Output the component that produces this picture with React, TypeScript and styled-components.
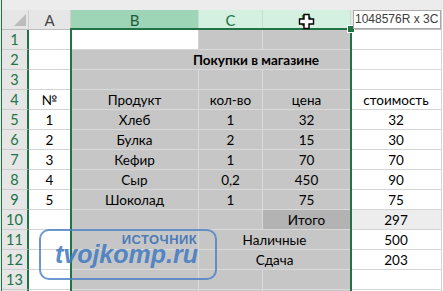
import { createGlobalStyle, styled, css } from "styled-components"

const GlobalStyle = createGlobalStyle`
  html, body { margin: 0; padding: 0; background: #fff; }
  #root { width: 443px; height: 291px; }
`;

const CELL_FONT = `"Lato", "Noto Sans", "Liberation Sans", sans-serif`;

const Root = styled.div`
  position: relative;
  width: 443px;
  height: 291px;
  overflow: hidden;
  box-sizing: border-box;
  padding-left: 1px;
  background: #e8e8e8;
  font-family: ${CELL_FONT};
`;

const Frame = styled.div`
  height: 100%;
  border-left: 1px solid #217346;
  display: flex;
  flex-direction: column;
  background: #fff;
`;

const TopStrip = styled.div`
  flex: none;
  height: 10px;
  background: #ececec;
`;

const Grid = styled.div`
  display: grid;
  grid-template-columns: 27px 42px 128px 64px 88px 91px;
  grid-auto-rows: 20px;
`;

const Corner = styled.div`
  position: relative;
  box-sizing: border-box;
  background: #e6e6e6;
  border-right: 1px solid #cfcfcf;
  border-bottom: 1px solid #bdbdbd;
  &::after {
    content: "";
    position: absolute;
    right: 2px;
    bottom: 3px;
    width: 12px;
    height: 12px;
    background: #bcbcbc;
    clip-path: polygon(100% 0, 100% 100%, 0 100%);
  }
`;

type HeadTone = "plain" | "active" | "sel";

const headBg: Record<HeadTone, string> = {
  plain: "#e6e6e6",
  active: "#9fd5b7",
  sel: "#d3f0e0",
};

const headColor: Record<HeadTone, string> = {
  plain: "#444",
  active: "#1a5c3a",
  sel: "#217346",
};

const ColHead = styled.div<{ $tone: HeadTone }>`
  box-sizing: border-box;
  display: flex;
  align-items: center;
  justify-content: center;
  padding-top: 1px;
  font-size: 15px;
  background: ${(p) => headBg[p.$tone]};
  color: ${(p) => headColor[p.$tone]};
  border-right: 1px solid ${(p) => (p.$tone === "plain" ? "#cfcfcf" : "#bfe3cf")};
  border-bottom: 1px solid #bdbdbd;
`;

const RowHead = styled.div`
  box-sizing: border-box;
  display: flex;
  align-items: center;
  justify-content: center;
  font-size: 14.5px;
  color: #217346;
  background: #e6e6e6;
  border-right: 2px solid #217346;
  border-bottom: 1px solid #cdcdcd;
`;

type Fill = "white" | "sel" | "dark" | "light";

const fillBg: Record<Fill, string> = {
  white: "#ffffff",
  sel: "#c6c6c6",
  dark: "#b3b3b3",
  light: "#ededed",
};

const lineColor = (f: Fill) => (f === "white" || f === "light" ? "#d4d4d4" : "#dadada");

const Cell = styled.div<{ $fill: Fill; $span?: number; $bold?: boolean }>`
  box-sizing: border-box;
  display: flex;
  align-items: center;
  justify-content: center;
  padding-top: 1px;
  white-space: nowrap;
  font-size: 13.5px;
  color: #000;
  background: ${(p) => fillBg[p.$fill]};
  border-bottom: 1px solid ${(p) => lineColor(p.$fill)};
  border-right: 1px solid ${(p) => lineColor(p.$fill)};
  ${(p) => p.$span && css`grid-column: span ${p.$span};`}
  ${(p) => p.$bold && css`font-weight: 700;`}
`;

// B2:E2 merged — the selection shade covers only B..D
const TitleCell = styled(Cell)`
  background: linear-gradient(to right, #c6c6c6 280px, #fff 280px);
  border-right-color: #d4d4d4;
`;

const Selection = styled.div`
  position: absolute;
  left: 70px;
  top: 28px;
  width: 282px;
  height: 300px;
  box-sizing: border-box;
  border: 2px solid #217346;
  pointer-events: none;
`;

const Handle = styled.div`
  position: absolute;
  left: 348px;
  top: 26px;
  width: 6px;
  height: 6px;
  box-sizing: border-box;
  background: #217346;
  outline: 1px solid #fff;
`;

const SizeTip = styled.div`
  position: absolute;
  left: 353px;
  top: 10px;
  width: 88px;
  height: 19px;
  box-sizing: border-box;
  background: #fff;
  border: 1px solid #a9a9a9;
  padding-left: 1px;
  font-family: "Liberation Sans", Arial, sans-serif;
  font-size: 12px;
  line-height: 17px;
  color: #3c3c3c;
  white-space: nowrap;
`;

const Cursor = styled.svg`
  position: absolute;
  left: 298px;
  top: 13px;
`;

const Stamp = styled.div`
  position: absolute;
  left: 39px;
  top: 229px;
  width: 178px;
  height: 51px;
  box-sizing: border-box;
  padding-right: 17px;
  border: 2px solid rgba(72, 128, 196, 0.8);
  border-radius: 10px;
  color: rgba(66, 124, 194, 0.9);
  font-family: "Liberation Sans", Arial, sans-serif;
  font-weight: 700;
  text-align: right;
`;

const StampLabel = styled.div`
  padding-right: 1px;
  margin-top: 4px;
  font-size: 13px;
  line-height: 10px;
  letter-spacing: 0.4px;
  color: rgba(64, 116, 182, 0.92);
`;

const StampSite = styled.div`
  margin-top: 0;
  font-size: 25px;
  line-height: 18px;
  font-style: italic;
  white-space: nowrap;
`;

type Row = { n: number | ""; cells: React.ReactNode };

const products = [
  ["1", "Хлеб", "1", "32", "32"],
  ["2", "Булка", "2", "15", "30"],
  ["3", "Кефир", "1", "70", "70"],
  ["4", "Сыр", "0,2", "450", "90"],
  ["5", "Шоколад", "1", "75", "75"],
];

function plainRow(a = "", b = "", c = "", d = "", e = "") {
  return (
    <>
      <Cell $fill="white">{a}</Cell>
      <Cell $fill="sel">{b}</Cell>
      <Cell $fill="sel">{c}</Cell>
      <Cell $fill="sel">{d}</Cell>
      <Cell $fill="white">{e}</Cell>
    </>
  );
}

export default function App() {
  const rows: Row[] = [
    {
      n: 1,
      cells: (
        <>
          <Cell $fill="white" />
          <Cell $fill="white" />
          <Cell $fill="sel" />
          <Cell $fill="sel" />
          <Cell $fill="white" />
        </>
      ),
    },
    {
      n: 2,
      cells: (
        <>
          <Cell $fill="white" />
          <TitleCell $fill="sel" $span={4} $bold>Покупки в магазине</TitleCell>
        </>
      ),
    },
    { n: 3, cells: plainRow() },
    { n: 4, cells: plainRow("№", "Продукт", "кол-во", "цена", "стоимость") },
    ...products.map((p, i) => ({ n: 5 + i, cells: plainRow(p[0], p[1], p[2], p[3], p[4]) })),
    {
      n: 10,
      cells: (
        <>
          <Cell $fill="white" />
          <Cell $fill="sel" />
          <Cell $fill="sel" />
          <Cell $fill="dark">Итого</Cell>
          <Cell $fill="light">297</Cell>
        </>
      ),
    },
    {
      n: 11,
      cells: (
        <>
          <Cell $fill="white" />
          <Cell $fill="sel" />
          <Cell $fill="sel" $span={2}>Наличные</Cell>
          <Cell $fill="white">500</Cell>
        </>
      ),
    },
    {
      n: 12,
      cells: (
        <>
          <Cell $fill="white" />
          <Cell $fill="sel" />
          <Cell $fill="sel" $span={2}>Сдача</Cell>
          <Cell $fill="white">203</Cell>
        </>
      ),
    },
    { n: 13, cells: plainRow() },
    { n: "", cells: plainRow() },
  ];

  return (
    <>
      <GlobalStyle />
      <Root>
        <Frame>
          <TopStrip />
          <Grid>
            <Corner />
            <ColHead $tone="plain">A</ColHead>
            <ColHead $tone="active">B</ColHead>
            <ColHead $tone="sel">C</ColHead>
            <ColHead $tone="sel">D</ColHead>
            {/* E header letter is hidden under the size tooltip */}
            <ColHead $tone="plain" />
            {rows.map((r, i) => (
              <RowFragment key={i} n={r.n}>
                {r.cells}
              </RowFragment>
            ))}
          </Grid>
        </Frame>
        <Selection />
        <Handle />
        <SizeTip>1048576R x 3C</SizeTip>
        <Cursor width="17" height="17" viewBox="0 0 17 17">
          <path
            d="M6 1.5h5v4.5h4.5v5h-4.5v4.5h-5v-4.5h-4.5v-5h4.5z"
            fill="#fff"
            stroke="#000"
            strokeWidth="1.4"
            strokeLinejoin="miter"
          />
        </Cursor>
        <Stamp>
          <StampLabel>ИСТОЧНИК</StampLabel>
          <StampSite>tvojkomp.ru</StampSite>
        </Stamp>
      </Root>
    </>
  );
}

function RowFragment({ n, children }: { n: number | ""; children: React.ReactNode }) {
  return (
    <>
      <RowHead>{n}</RowHead>
      {children}
    </>
  );
}
